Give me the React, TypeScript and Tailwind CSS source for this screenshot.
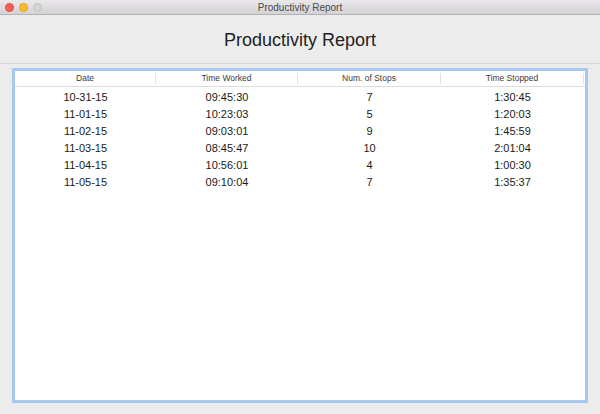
const rows = [
  ["10-31-15", "09:45:30", "7", "1:30:45"],
  ["11-01-15", "10:23:03", "5", "1:20:03"],
  ["11-02-15", "09:03:01", "9", "1:45:59"],
  ["11-03-15", "08:45:47", "10", "2:01:04"],
  ["11-04-15", "10:56:01", "4", "1:00:30"],
  ["11-05-15", "09:10:04", "7", "1:35:37"],
]

const columns = [
  { label: "Date", width: "w-[141px]" },
  { label: "Time Worked", width: "w-[142px]" },
  { label: "Num. of Stops", width: "w-[143px]" },
  { label: "Time Stopped", width: "w-[143px]" },
]

function TrafficLights() {
  return (
    <div className="flex items-center gap-[5px] pl-[5px]">
      <span className="h-[9px] w-[9px] rounded-full border border-[#e2463f] bg-[#fc5f57]" />
      <span className="h-[9px] w-[9px] rounded-full border border-[#e1a116] bg-[#fdbc2e]" />
      <span className="h-[9px] w-[9px] rounded-full border border-[#c4c4c4] bg-[#d3d3d3]" />
    </div>
  )
}

export default function App() {
  return (
    <div
      className="flex h-[414px] w-[600px] flex-col bg-[#ececec] text-[#1f1f1f]"
      style={{ fontFamily: '"Liberation Sans", Arial, sans-serif' }}
    >
      {/* title bar */}
      <div className="relative flex h-[15px] items-center border-b border-[#b3b3b3] bg-gradient-to-b from-[#eae8ea] to-[#d4d2d4]">
        <TrafficLights />
        <div className="absolute inset-0 flex items-center justify-center text-[10px] text-[#4a4a4a]">
          Productivity Report
        </div>
      </div>

      {/* heading */}
      <div className="flex h-[49px] items-center justify-center border-b border-[#d6d6d6] pt-[3px] text-[18px] text-[#222]">
        Productivity Report
      </div>

      {/* table */}
      <div className="mx-[12px] mt-[4px] flex h-[335px] flex-col border-[3px] border-[#a6c8f1] bg-white">
        <div className="flex h-[16px] border-b border-[#dcdcdc] bg-white">
          {columns.map((c) => (
            <div key={c.label} className={`${c.width} flex items-center`}>
              <div className="flex-1 text-center text-[8.5px] text-[#3a3a3a]">{c.label}</div>
              <div className="h-[11px] w-px bg-[#e2e2e2]" />
            </div>
          ))}
        </div>
        <div className="pt-[2px]">
          {rows.map((r, i) => (
            <div key={i} className="flex h-[17px] items-center text-[11px] text-[#1a1a1a]">
              {r.map((cell, j) => (
                <div key={j} className={`${columns[j].width} text-center`}>
                  {cell}
                </div>
              ))}
            </div>
          ))}
        </div>
      </div>
    </div>
  )
}
